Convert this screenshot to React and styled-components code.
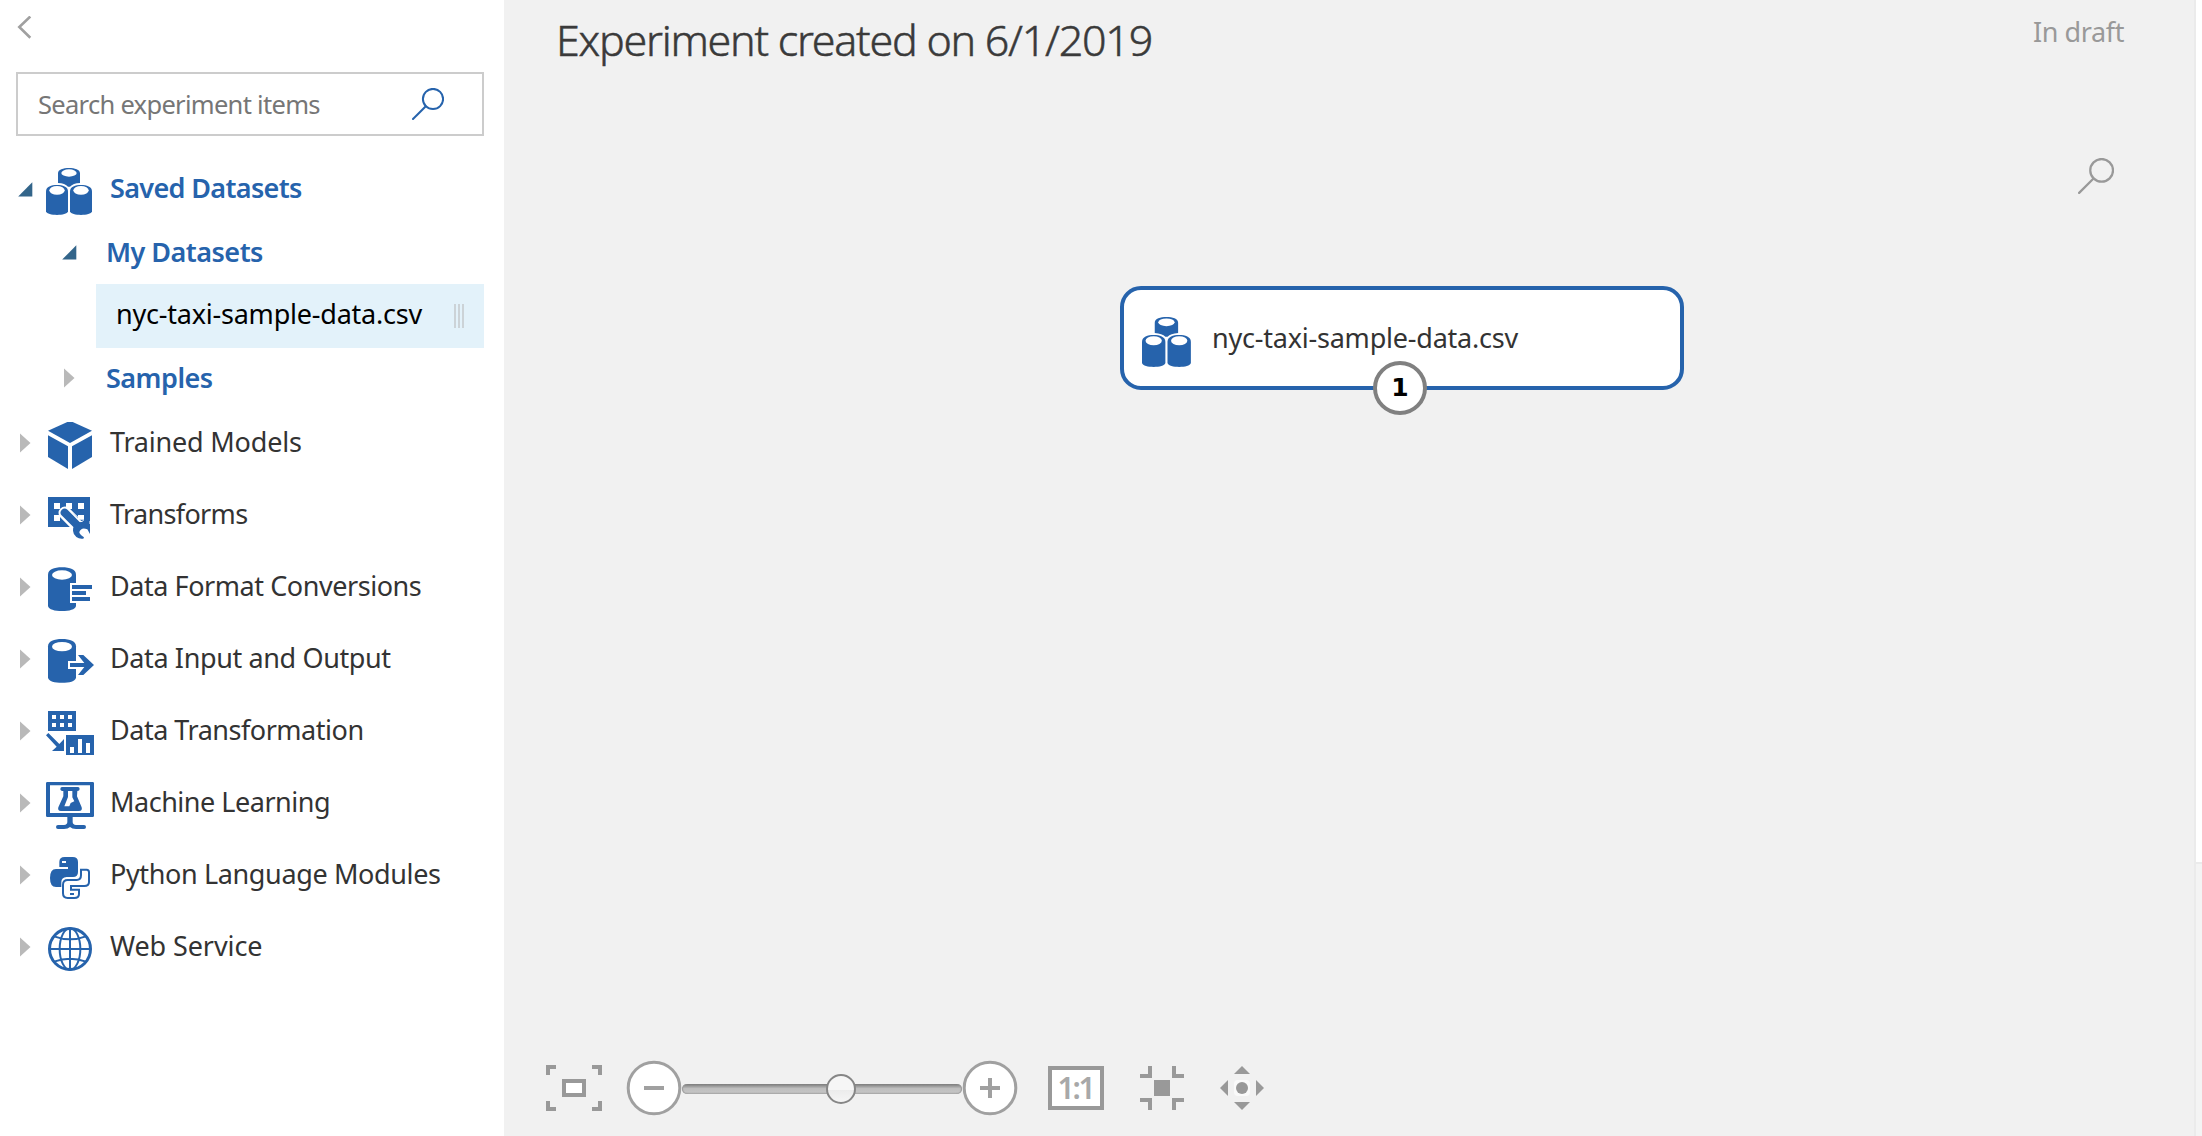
import React from "react";
import styled, { createGlobalStyle } from "styled-components";

const BLUE = "#2663ac";
const GRAY = "#999999";
const PAGE = "#f1f1f1";

const GlobalStyle = createGlobalStyle`
  * { box-sizing: border-box; }
  body {
    margin: 0;
    background: ${PAGE};
    font-family: "Noto Sans", "Open Sans", sans-serif;
    color: #333;
    overflow: hidden;
  }
`;

const Page = styled.div`
  display: flex;
  width: 100%;
  height: 100vh;
`;

/* Sidebar */
const Sidebar = styled.aside`
  flex: 0 0 504px;
  background: #fff;
  padding: 16px 20px 0 16px;
`;

const Collapse = styled.button`
  display: block;
  width: 17px;
  height: 24px;
  margin-bottom: 32px;
  padding: 0;
  border: 0;
  background: none;
`;

const SearchBox = styled.div`
  display: flex;
  align-items: center;
  justify-content: space-between;
  height: 64px;
  padding: 0 38px 0 20px;
  border: 2px solid #ccc;
`;

const Placeholder = styled.span`
  font-size: 25.5px;
  letter-spacing: -0.7px;
  color: #767676;
  white-space: nowrap;
`;

const Tree = styled.div`
  margin-top: 20px;
`;

const TreeRow = styled.div`
  display: flex;
  align-items: flex-start;
  height: ${(p) => p.$height || 72}px;
  padding: 12px 0 0 2px;
`;

const ArrowSlot = styled.span`
  flex: 0 0 28px;
  height: 42px;
  display: flex;
  align-items: center;
`;

const Label = styled.span`
  line-height: 48px;
  margin: -4px 0 0 16px;
  font-size: 27px;
  letter-spacing: ${(p) => p.$track || 0}px;
  font-weight: ${(p) => (p.$strong ? 600 : 400)};
  color: ${(p) => (p.$strong ? BLUE : "#333")};
  white-space: nowrap;
`;

const SubRow = styled.div`
  display: flex;
  align-items: center;
  height: ${(p) => p.$height}px;
  padding: 0 0 ${(p) => p.$lift || 0}px 46px;
`;

const SubArrow = styled.span`
  flex: 0 0 44px;
  display: flex;
  padding-top: 2px;
`;

const SubLabel = styled.span`
  font-size: 27px;
  font-weight: 600;
  letter-spacing: -0.52px;
  color: ${BLUE};
`;

const Selected = styled.div`
  display: flex;
  align-items: center;
  justify-content: space-between;
  height: 64px;
  margin-left: 80px;
  padding: 0 20px 5px;
  background: #e3f2fa;
  color: #000;
`;

const DatasetName = styled.span`
  font-size: 27px;
  letter-spacing: -0.22px;
  white-space: nowrap;
`;

const Grip = styled.span`
  width: 10px;
  height: 24px;
  margin-top: 5px;
  border: solid #ccd3d7;
  border-width: 0 2px;
  display: flex;
  justify-content: center;
  &::before {
    content: "";
    width: 2px;
    background: #ccd3d7;
  }
`;

/* Workspace */
const Workspace = styled.main`
  flex: 1;
  display: flex;
  flex-direction: column;
  min-width: 0;
`;

const Header = styled.header`
  display: flex;
  justify-content: space-between;
  align-items: flex-start;
  height: 90px;
  padding: 0 70px 0 52px;
`;

const Title = styled.h1`
  margin: 10px 0 0;
  font-size: 43px;
  font-weight: 300;
  line-height: 60px;
  letter-spacing: -1.25px;
  color: #3a3a3a;
  -webkit-text-stroke: 0.5px #3a3a3a;
  white-space: nowrap;
`;

const Status = styled.span`
  margin-top: 12px;
  font-size: 27px;
  line-height: 40px;
  letter-spacing: -0.4px;
  color: ${GRAY};
`;

const Canvas = styled.section`
  flex: 1;
  position: relative;
`;

const CanvasSearch = styled.span`
  position: absolute;
  top: 68px;
  right: 80px;
  display: flex;
`;

const Node = styled.div`
  position: absolute;
  left: 616px;
  top: 196px;
  width: 564px;
  height: 104px;
  display: flex;
  align-items: center;
  padding: 0 18px;
  border: 4px solid ${BLUE};
  border-radius: 21px;
  background: #fff;
`;

const NodeIcon = styled.span`
  display: flex;
  margin: 8px 19px 0 0;
`;

const NodeName = styled(DatasetName)`
  color: #333;
  margin-bottom: 1px;
`;

const Port = styled.span`
  position: absolute;
  left: 249px;
  top: 71px;
  width: 54px;
  height: 54px;
  display: flex;
  align-items: center;
  justify-content: center;
  padding-bottom: 2px;
  border: 4px solid #808080;
  border-radius: 50%;
  background: #fff;
  color: #000;
  font: bold 25px "DejaVu Sans", sans-serif;
`;

const ZoomBar = styled.footer`
  display: flex;
  align-items: center;
  height: 96px;
  padding-left: 42px;
`;

const Tool = styled.button`
  display: flex;
  padding: 0;
  border: 0;
  background: none;
  margin-left: ${(p) => p.$gap || 0}px;
`;

const Track = styled.div`
  display: flex;
  align-items: center;
  justify-content: center;
  width: 280px;
  height: 10px;
  margin-top: 2px;
  padding-left: 38px;
  border-radius: 5px;
  background: linear-gradient(#777 0, #a0a0a0 25%, #bebebe 45%, #c4c4c4 80%, #a9a9a9 100%);
  box-shadow: inset 1px 0 1px #999, inset -1px 0 1px #999;
`;

const Knob = styled.span`
  flex: 0 0 30px;
  height: 30px;
  border: 2px solid #868686;
  border-radius: 50%;
  background: linear-gradient(#f6f6f6 0 52%, #ebebeb 52%, #f5f5f5);
`;

const ActualSize = styled.button`
  display: flex;
  align-items: center;
  justify-content: center;
  width: 56px;
  height: 44px;
  margin-left: 30px;
  padding: 0 1px 0 0;
  border: 4px solid ${GRAY};
  background: #fff;
  color: #a8a8a8;
  font: 600 30px/36px "Noto Sans", sans-serif;
  letter-spacing: -2.2px;
`;

/* Right edge: collapsed properties panel */
const EdgePanel = styled.aside`
  flex: 0 0 8px;
  display: flex;
  flex-direction: column;
  border-left: 2px solid #ebebeb;
`;

const EdgeTop = styled.div`
  height: 862px;
  background: #fff;
`;

const EdgeBottom = styled.div`
  flex: 1;
  border-top: 2px solid #ebebeb;
  background: #f4f4f4;
`;

/* Icons */
const CollapsedArrow = styled.svg`
  margin-left: 2px;
`;

const Collapsed = () => (
  <CollapsedArrow width="12" height="20" viewBox="0 0 12 20">
    <path d="M0 0.5 10.5 10 0 19.5z" fill="#b9b9b9" />
  </CollapsedArrow>
);

const Expanded = () => (
  <svg width="15" height="15" viewBox="0 0 15 15">
    <path d="M14.3 0.3V14.6H0.2z" fill="#33658a" />
  </svg>
);

const Magnifier = ({ size, color, width }) => (
  <svg width={size} height={size} viewBox="0 0 32 32" fill="none" stroke={color} strokeWidth={width}>
    <circle cx="21" cy="11" r="10.1" />
    <path d="M13.8 18.2 1 31" strokeLinecap="round" />
  </svg>
);

const Icon = ({ box, size = 48, children }) => (
  <svg width={size} height={size} viewBox={box} fill={BLUE}>
    {children}
  </svg>
);

const DatasetIcon = ({ size }) => (
  <Icon box="138 504 144 144" size={size}>
    <path d="M174 520C174 508 190 504 207 504S240 508 240 520V549Q219 550 210 560H204Q195 550 174 549z" />
    <ellipse cx="207" cy="519" rx="23" ry="11" fill="#fff" />
    <path d="M138 574C138 560 154 555 171 555S204 560 204 574V634C202 642 187 645 171 645S140 642 138 634z" />
    <path d="M210 574C210 560 226 555 243 555S276 560 276 574V634C274 642 259 645 243 645S212 642 210 634z" />
    <ellipse cx="171" cy="571" rx="23" ry="13" fill="#fff" />
    <ellipse cx="243" cy="571" rx="23" ry="13" fill="#fff" />
  </Icon>
);

const CubeIcon = () => (
  <Icon box="138 66 144 144">
    <path d="M202 66H218L276 92 210 129 144 92z" />
    <path d="M144 106 204 139V207L144 171z" />
    <path d="M276 106 216 139V207L276 171z" />
  </Icon>
);

const TransformsIcon = () => (
  <Icon box="138 282 144 144">
    <path d="M144 291H270V381H144z" />
    <path d="M162 309h18v18h-18zM198 309h18v18h-18zM234 309h18v18h-18zM162 345h18v18h-18zM234 345h18v18h-18z" fill="#fff" />
    <path d="M195 339 238 382" stroke="#fff" strokeWidth="39" strokeLinecap="round" />
    <path d="M194 338 234 378" stroke={BLUE} strokeWidth="24" strokeLinecap="round" />
    <path d="M250 416A26 26 0 0 1 219 392Q219 372 238 367Q258 362 270 374V402L262 388Q244 380 238 396Q237 402 252 412z" />
    <path d="M216 337 244 363Q256 357 270 366V345H250L234 345V355z" fill={BLUE} />
    <path d="M234 345h18v14h-14l-4-4z" fill="#fff" />
    <path d="M270 363V372" stroke="#fff" strokeWidth="3" />
  </Icon>
);

const Cylinder = ({ top }) => (
  <g transform={`translate(0 ${top})`}>
    <path d="M144 22C144 7 162 0 186 0S228 7 228 22V116C226 127 208 131 186 131S146 127 144 116z" />
    <ellipse cx="186" cy="23" rx="30" ry="14" fill="#fff" />
  </g>
);

const FormatIcon = () => (
  <Icon box="138 498 144 144">
    <Cylinder top={502} />
    <path d="M210 549H282V609H210z" fill="#fff" />
    <path d="M216 555h60v12h-60zM216 573h42v12h-42zM216 591h54v12h-54z" />
  </Icon>
);

const InputOutputIcon = () => (
  <Icon box="138 84 144 144">
    <Cylinder top={87} />
    <path d="M204 153H232V177H204z" fill="#fff" />
    <path d="M210 159H253L234 135H250L282 165 250 195H234L253 171H210z" />
  </Icon>
);

const TransformationIcon = () => (
  <Icon box="138 300 144 144">
    <path d="M144 303H228V363H144zM198 375H282V435H198z" />
    <path d="M156 315h12v12h-12zM180 315h12v12h-12zM204 315h12v12h-12zM156 339h12v12h-12zM180 339h12v12h-12zM204 339h12v12h-12z" fill="#fff" />
    <path d="M210 411h12v18h-12zM234 387h12v42h-12zM258 399h12v30h-12z" fill="#fff" />
    <path d="M145 369 178 402 192 387V423H156L170 410 138 376z" />
  </Icon>
);

const LearningIcon = () => (
  <Icon box="138 36 144 144">
    <path d="M142 36H278Q282 36 282 40V137Q282 141 278 141H142Q138 141 138 137V40Q138 36 142 36zM150 46V129H270V46z" fillRule="evenodd" />
    <path d="M202 140H218V156Q218 164 228 165H252Q258 165 258 171T252 177H228Q216 177 210 171Q204 177 192 177H174Q168 177 168 171T174 165H192Q202 164 202 156z" />
    <path d="M186 51H234Q239 51 239 57T232 63L231 79 245 112Q248 123 237 123H183Q172 123 175 112L190 79V63Q181 63 181 57T186 51z" />
    <path d="M204 63H217V82L223 94 212 99 208 109H193L204 81z" fill="#fff" />
  </Icon>
);

const PythonIcon = () => (
  <Icon box="138 252 144 144">
    <path d="M178 276Q178 261 194 261H218Q234 261 234 276V306Q234 321 219 321H200Q184 322 184 336V351H168Q150 351 150 324T168 297H204V291H178z" />
    <path d="M186 273h12v6h-12z" fill="#fff" />
    <path
      d="M243 299H260Q267 299 267 307V336Q267 348 253 348H213V359H237V372Q237 384 223 384H203Q189 384 189 370V344Q189 330 203 330H230Q243 330 243 316z"
      fill="#fff"
      stroke={BLUE}
      strokeWidth="6"
    />
    <path d="M210 369h12v6h-12z" />
  </Icon>
);

const WebIcon = () => (
  <Icon box="138 468 144 144">
    <g fill="none" stroke={BLUE} strokeWidth="6">
      <circle cx="210" cy="537" r="61.5" strokeWidth="9" />
      <ellipse cx="210" cy="537" rx="31" ry="62" />
      <path d="M210 474V600M147 537H273M162 499Q210 517 258 499M162 575Q210 557 258 575" />
    </g>
  </Icon>
);

const FitIcon = () => (
  <svg width="56" height="46" viewBox="0 0 56 46" fill="none" stroke={GRAY} strokeWidth="4">
    <path d="M2 10V2H10M46 2H54V10M54 36V44H46M10 44H2V36" />
    <rect x="18" y="16" width="20" height="14" fill="#fff" />
  </svg>
);

const RoundIcon = ({ plus }) => (
  <svg width="56" height="56" viewBox="0 0 56 56" stroke="#a0a0a0" fill="none">
    <circle cx="28" cy="28" r="25.8" fill="#fff" strokeWidth="3" />
    <path d={plus ? "M18 28H38M28 18V38" : "M18 28H38"} strokeWidth="4" />
  </svg>
);

const CompactIcon = () => (
  <svg width="44" height="44" viewBox="0 0 44 44" fill="none" stroke={GRAY} strokeWidth="4">
    <path d="M0 10H10V0M34 0V10H44M44 34H34V44M10 44V34H0" />
    <path d="M14 14H30V30H14z" fill={GRAY} stroke="none" />
  </svg>
);

const PanIcon = () => (
  <svg width="44" height="44" viewBox="0 0 44 44" fill={GRAY}>
    <rect x="14" y="14" width="16" height="16" rx="4" fill="#fafafa" />
    <circle cx="22" cy="22" r="6" />
    <path d="M22 0 30 8H14zM22 44 30 36H14zM0 22 8 14V30zM44 22 36 14V30z" />
  </svg>
);

const categories = [
  { name: "Trained Models", icon: CubeIcon, track: -0.2 },
  { name: "Transforms", icon: TransformsIcon, track: -0.65 },
  { name: "Data Format Conversions", icon: FormatIcon, track: -0.44 },
  { name: "Data Input and Output", icon: InputOutputIcon, track: -0.38 },
  { name: "Data Transformation", icon: TransformationIcon, track: -0.48 },
  { name: "Machine Learning", icon: LearningIcon, track: -0.48 },
  { name: "Python Language Modules", icon: PythonIcon, track: -0.37 },
  { name: "Web Service", icon: WebIcon, track: -0.1 },
];

export default function App() {
  return (
    <>
      <GlobalStyle />
      <Page>
        <Sidebar>
          <Collapse aria-label="Collapse">
            <svg width="17" height="24" viewBox="0 0 17 24" fill="none" stroke="#a0a0a0" strokeWidth="2.6">
              <path d="M14.3 0.5 3.3 11 14.3 21.7" />
            </svg>
          </Collapse>
          <SearchBox>
            <Placeholder>Search experiment items</Placeholder>
            <Magnifier size={32} color={BLUE} width={2} />
          </SearchBox>
          <Tree>
            <TreeRow $height={64}>
              <ArrowSlot><Expanded /></ArrowSlot>
              <DatasetIcon />
              <Label $strong $track={-0.65}>Saved Datasets</Label>
            </TreeRow>
            <SubRow $height={64} $lift={2}>
              <SubArrow><Expanded /></SubArrow>
              <SubLabel>My Datasets</SubLabel>
            </SubRow>
            <Selected>
              <DatasetName>nyc-taxi-sample-data.csv</DatasetName>
              <Grip />
            </Selected>
            <SubRow $height={62} $lift={4}>
              <SubArrow><Collapsed /></SubArrow>
              <SubLabel>Samples</SubLabel>
            </SubRow>
            {categories.map(({ name, icon: CategoryIcon, track }) => (
              <TreeRow key={name}>
                <ArrowSlot><Collapsed /></ArrowSlot>
                <CategoryIcon />
                <Label $track={track}>{name}</Label>
              </TreeRow>
            ))}
          </Tree>
        </Sidebar>
        <Workspace>
          <Header>
            <Title>Experiment created on 6/1/2019</Title>
            <Status>In draft</Status>
          </Header>
          <Canvas>
            <CanvasSearch><Magnifier size={36} color={GRAY} width={2} /></CanvasSearch>
            <Node>
              <NodeIcon><DatasetIcon size={51} /></NodeIcon>
              <NodeName>nyc-taxi-sample-data.csv</NodeName>
              <Port>1</Port>
            </Node>
          </Canvas>
          <ZoomBar>
            <Tool aria-label="Zoom to fit"><FitIcon /></Tool>
            <Tool aria-label="Zoom out" $gap={24}><RoundIcon /></Tool>
            <Track><Knob /></Track>
            <Tool aria-label="Zoom in"><RoundIcon plus /></Tool>
            <ActualSize>1:1</ActualSize>
            <Tool aria-label="Compact" $gap={36}><CompactIcon /></Tool>
            <Tool aria-label="Pan" $gap={36}><PanIcon /></Tool>
          </ZoomBar>
        </Workspace>
        <EdgePanel>
          <EdgeTop />
          <EdgeBottom />
        </EdgePanel>
      </Page>
    </>
  );
}
